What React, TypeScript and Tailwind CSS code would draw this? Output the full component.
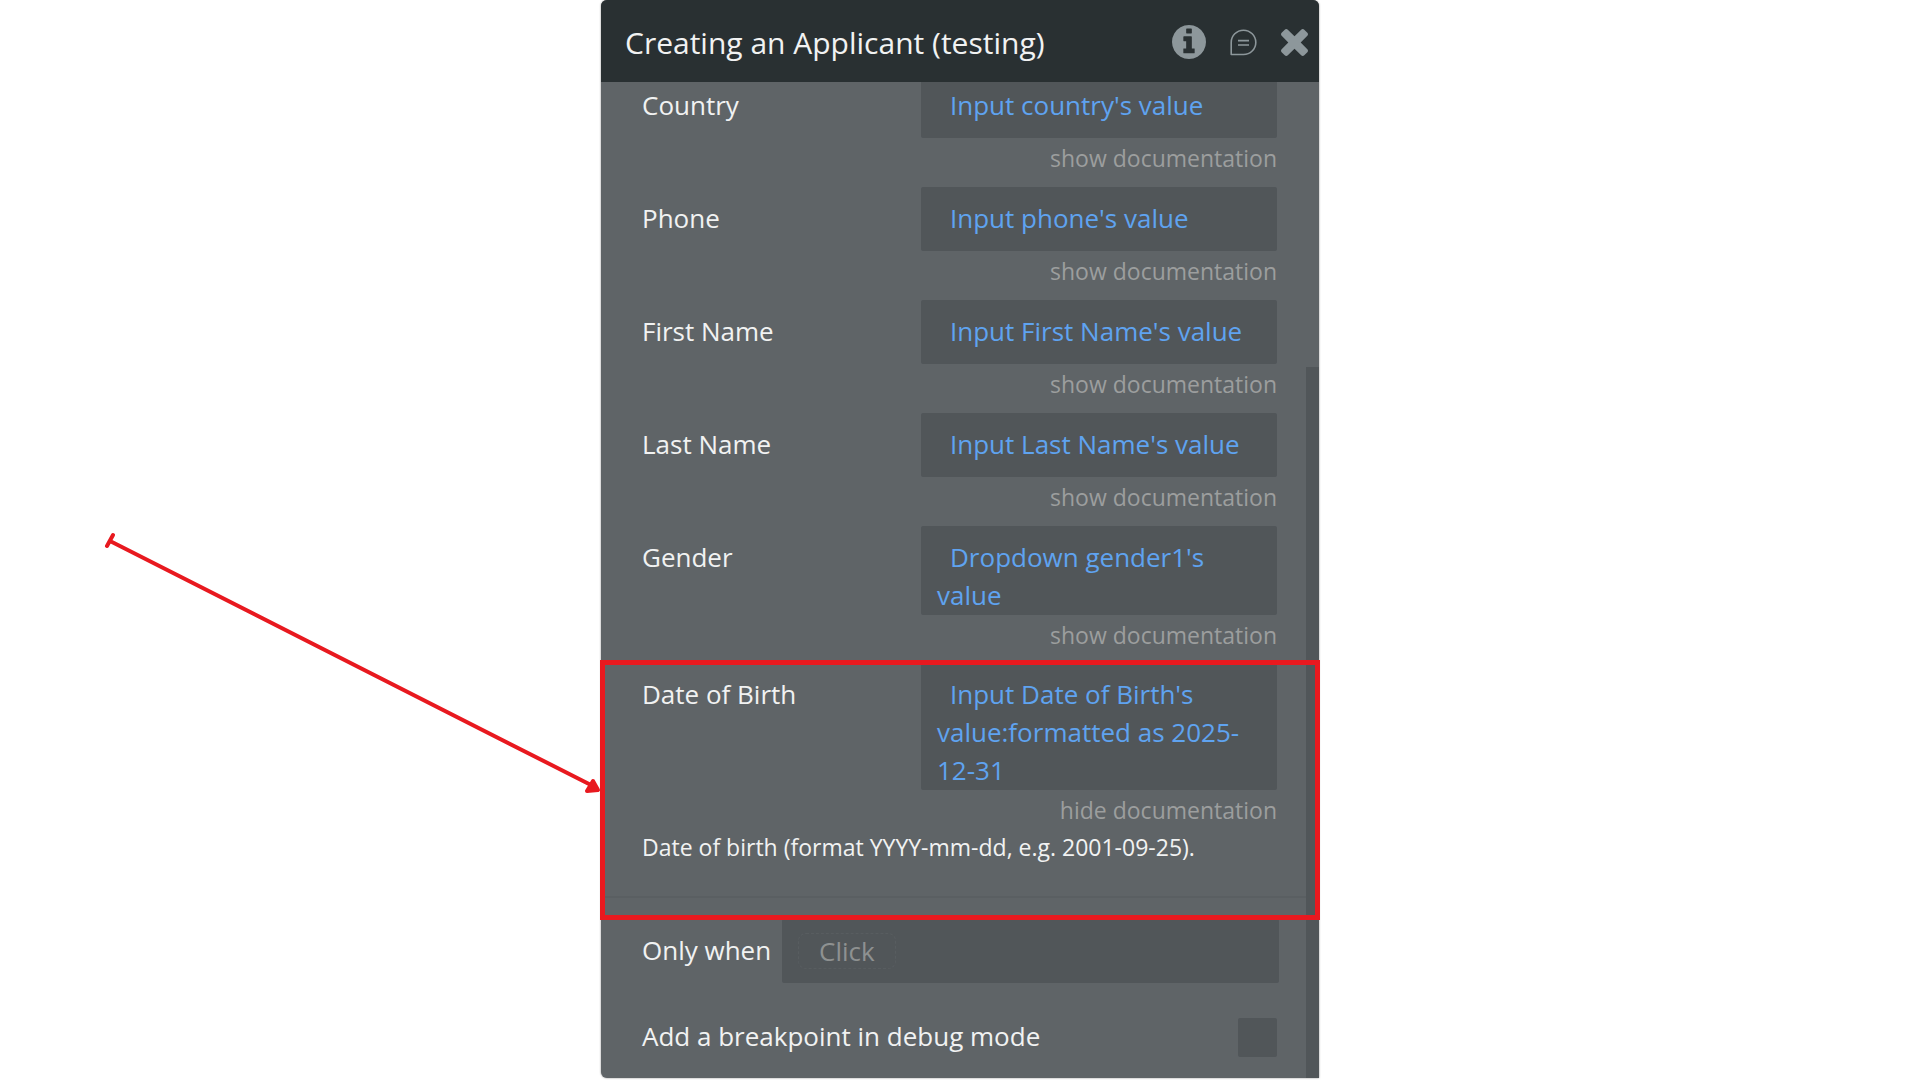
import { ReactNode } from "react";

type FieldProps = {
  id: string;
  label: string;
  value: string;
  docs?: string;
};

const fields: FieldProps[] = [
  { id: "country", label: "Country", value: "Input country's value" },
  { id: "phone", label: "Phone", value: "Input phone's value" },
  { id: "first-name", label: "First Name", value: "Input First Name's value" },
  { id: "last-name", label: "Last Name", value: "Input Last Name's value" },
  { id: "gender", label: "Gender", value: "Dropdown gender1's value" },
];

function Field({ id, label, value, docs = "show documentation" }: FieldProps) {
  return (
    <div className="grid grid-cols-[279px_1fr] pr-[29px] pl-[41px]">
      <label htmlFor={id} className="pt-3 text-[26px] leading-[38px]">
        {label}
      </label>
      <button
        id={id}
        type="button"
        className="min-h-16 rounded-xs bg-[#515659] px-4 pt-3 pb-px text-left text-[26px] leading-[38px] text-[#5fa3f0]"
      >
        <span className="block min-h-[51px] indent-[13px]">{value}</span>
      </button>
      <button
        type="button"
        className="col-start-2 justify-self-end text-[23px] leading-10 text-[#9c9e9e]"
      >
        {docs}
      </button>
    </div>
  );
}

function IconButton({ label, children }: { label: string; children: ReactNode }) {
  return (
    <button type="button" aria-label={label} className="text-[#8d979b]">
      {children}
    </button>
  );
}

function Annotation() {
  return (
    <>
      <div className="pointer-events-none absolute -top-[3px] -right-[14px] -bottom-6 -left-px border-5 border-[#e8191f]" />
      <svg
        aria-hidden="true"
        viewBox="0 0 500 280"
        className="pointer-events-none absolute -top-[143px] right-full h-[280px] w-[500px]"
        fill="none"
        stroke="#e8191f"
        strokeWidth="4"
        strokeLinecap="round"
        strokeLinejoin="round"
      >
        <path d="M6 26 12 15M9 21 488 264" />
        <path d="M492 261 497 270 486 271Z" fill="#e8191f" />
      </svg>
    </>
  );
}

export default function App() {
  return (
    <main className="flex min-h-screen items-start justify-center bg-white font-['Open_Sans',sans-serif] text-[#f1f2f2]">
      <section className="w-full max-w-[718px] rounded-t-md rounded-bl-md bg-[#5f6467] shadow-[0_0_2px_#00000080]">
        <header className="relative z-10 flex h-[82px] items-center gap-6 rounded-t-md bg-[#293032] pt-0.5 pr-[11px] pl-6">
          <h1 className="flex-1 pt-px text-3xl leading-10">Creating an Applicant (testing)</h1>
          <IconButton label="Information">
            <svg viewBox="128 128 1536 1536" className="size-[34px]" fill="currentColor">
              <path d="M1152 1376v-160q0-14-9-23t-23-9h-96v-512q0-14-9-23t-23-9h-320q-14 0-23 9t-9 23v160q0 14 9 23t23 9h96v320h-96q-14 0-23 9t-9 23v160q0 14 9 23t23 9h448q14 0 23-9t9-23zm-128-896v-160q0-14-9-23t-23-9h-192q-14 0-23 9t-9 23v160q0 14 9 23t23 9h192q14 0 23-9t9-23zm640 416q0 209-103 385.5t-279.5 279.5-385.5 103-385.5-103-279.5-279.5-103-385.5 103-385.5 279.5-279.5 385.5-103 385.5 103 279.5 279.5 103 385.5z" />
            </svg>
          </IconButton>
          <IconButton label="Comments">
            <svg
              viewBox="0 0 27 27"
              className="size-[27px]"
              fill="none"
              stroke="currentColor"
              strokeWidth="1.6"
              strokeLinejoin="round"
            >
              <path d="M1.2 25.5V13.5A12.3 12.2 0 0 1 13.5 1.2 12.3 12.2 0 0 1 25.8 13.4 12.3 12.2 0 0 1 13.5 25.5Z" />
              <path d="M8 11.6H19M8 16H19" />
            </svg>
          </IconButton>
          <IconButton label="Close">
            <svg viewBox="302 366 1188 1188" className="size-[27px]" fill="currentColor">
              <path d="M1490 1322q0 40-28 68l-136 136q-28 28-68 28t-68-28l-294-294-294 294q-28 28-68 28t-68-28l-136-136q-28-28-28-68t28-68l294-294-294-294q-28-28-28-68t28-68l136-136q28-28 68-28t68 28l294 294 294-294q28-28 68-28t68 28l136 136q28 28 28 68t-28 68l-294 294 294 294q28 28 28 68z" />
            </svg>
          </IconButton>
        </header>

        <div className="flex">
          <div className="min-w-0 flex-1">
            <div className="-mt-2 flex flex-col gap-[9px] pb-2">
              {fields.map((field) => (
                <Field key={field.id} {...field} />
              ))}
            </div>

            <div className="relative border-b-2 border-[#5a5f62] pb-8">
              <Field
                id="date-of-birth"
                label="Date of Birth"
                value="Input Date of Birth's value:formatted as 2025-12-31"
                docs="hide documentation"
              />
              <p className="pl-[41px] text-[23px] leading-[34px]">
                Date of birth (format YYYY-mm-dd, e.g. 2001-09-25).
              </p>
              <Annotation />
            </div>

            <div className="mt-[21px] flex pr-[27px] pl-[41px]">
              <label htmlFor="only-when" className="w-[140px] pt-3 text-[26px] leading-[38px]">
                Only when
              </label>
              <button
                id="only-when"
                type="button"
                className="h-16 flex-1 rounded-xs bg-[#515659] px-4 text-left text-[26px] leading-[34px] text-[#8e9191]"
              >
                <span className="inline-block rounded-lg border border-dashed border-[#585d60] px-5">
                  Click
                </span>
              </button>
            </div>

            <div className="mt-[35px] flex items-start justify-between pr-[29px] pb-[21px] pl-[41px]">
              <label htmlFor="breakpoint" className="text-[26px] leading-9">
                Add a breakpoint in debug mode
              </label>
              <input
                id="breakpoint"
                type="checkbox"
                className="size-[39px] appearance-none rounded-xs bg-[#515659]"
              />
            </div>
          </div>
          <div className="mt-[285px] w-[13px] bg-[#515659]" />
        </div>
      </section>
    </main>
  );
}
